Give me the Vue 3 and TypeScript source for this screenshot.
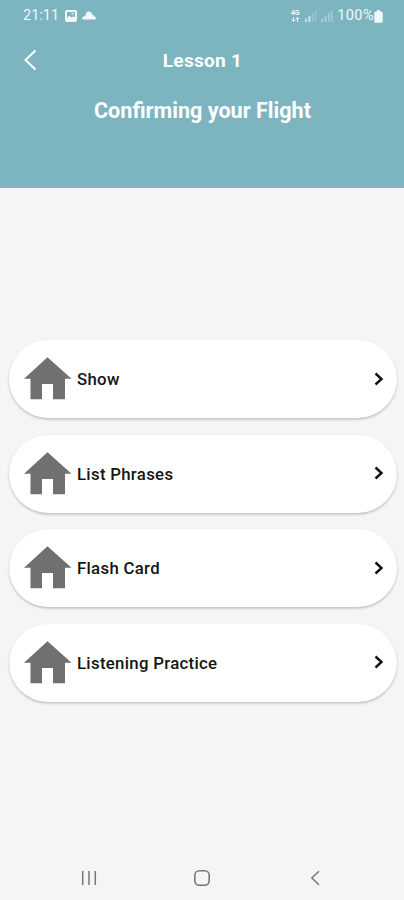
<script setup lang="ts">
interface LessonItem {
  id: string
  title: string
}

const items: LessonItem[] = [
  { id: 'show', title: 'Show' },
  { id: 'phrases', title: 'List Phrases' },
  { id: 'flash', title: 'Flash Card' },
  { id: 'listening', title: 'Listening Practice' },
]
</script>

<template>
  <div class="screen">
    <header class="header">
      <div class="status">
        <span class="time">21:11</span>
        <svg class="photo" width="12" height="12" viewBox="0 0 12 12">
          <rect x="1" y="1" width="10" height="10" rx="1" fill="none" stroke="currentColor" stroke-width="2" />
          <path d="M1.500 10V8L4.500 5.800l2 1.700L9 6.300l1.500 1.500V10z" fill="currentColor" />
          <path d="M6.500 3.800h2.300" stroke="currentColor" stroke-width="1.200" />
        </svg>
        <svg class="cloud" width="14" height="9" viewBox="0 0 14 9">
          <path d="M1.300 8.500C-.2 8.500-.2 6.400 1.200 5.800L3.300 4.800C3.700 2 5 .5 6.800.5s3 1.300 3.700 3.300l2.300 1.700c1.700 1.100 1.300 3-.2 3z" fill="currentColor" />
        </svg>
        <span class="spacer"></span>
        <span class="network">
          <span>4G</span>
          <svg width="9" height="5" viewBox="0 0 9 5">
            <path d="M2.500 0v4.500M.5 2.700l2 1.800 2-1.800M6.500 5V.5M4.800 2.200 6.500.5l1.700 1.700" fill="none" stroke="currentColor" stroke-width="1" />
          </svg>
        </span>
        <svg class="signal" width="12" height="12" viewBox="0 0 12 12" fill="currentColor">
          <path d="M0 12V9.500L2 8v4zM3.300 12V7L5.600 5v7z" />
          <path d="M7 12V3.500L8.800 2v10zM10 12V1.200L11.600 0v12z" opacity=".35" />
        </svg>
        <svg class="signal second" width="12" height="12" viewBox="0 0 12 12" fill="currentColor">
          <path d="M0 12V9.500L2 8v4zM3.300 12V7L5.600 5v7zM7 12V3.500L8.800 2v10zM10 12V1.200L11.600 0v12z" />
        </svg>
        <span class="percent">100%</span>
        <svg class="battery" width="9" height="13" viewBox="0 0 9 13">
          <path d="M3 0h3v1.500h1.200Q8.700 1.500 8.700 3v8.300Q8.700 12.800 7.200 12.800H1.800Q.3 12.800.3 11.300V3Q.3 1.500 1.800 1.500H3z" fill="currentColor" />
        </svg>
      </div>
      <div class="toolbar">
        <svg class="back" width="14" height="22" viewBox="0 0 14 22">
          <path d="M12.500 1.500 2.500 11l10 9.500" fill="none" stroke="currentColor" stroke-width="2" />
        </svg>
        <h1 class="title">Lesson 1</h1>
      </div>
      <h2 class="subtitle">Confirming your Flight</h2>
    </header>

    <main class="list">
      <button v-for="item in items" :key="item.id" class="card" type="button">
        <svg class="house" width="48" height="43" viewBox="0 0 48 43">
          <path d="M23.500.3 0 21.700h6.500v20.500H18V27h11v15.200h12V21.700h6.500z" fill="#707070" />
        </svg>
        <span class="label">{{ item.title }}</span>
        <svg class="chevron" width="10" height="14" viewBox="0 0 10 14">
          <path d="M1.500 1.500 7.500 7l-6 5.500" fill="none" stroke="#111" stroke-width="2.400" />
        </svg>
      </button>
    </main>

    <nav class="nav">
      <svg width="16" height="16" viewBox="0 0 16 16">
        <path d="M1.700 1v14M8 1v14M14.300 1v14" stroke="currentColor" stroke-width="1.500" />
      </svg>
      <svg width="18" height="18" viewBox="0 0 18 18">
        <rect x="1.800" y="1.800" width="14.400" height="14.400" rx="4.500" fill="none" stroke="currentColor" stroke-width="1.600" />
      </svg>
      <svg width="16" height="16" viewBox="0 0 16 16">
        <path d="M12 1.200 4.800 8l7.200 6.800" fill="none" stroke="currentColor" stroke-width="1.500" />
      </svg>
    </nav>
  </div>
</template>

<style>
body {
  margin: 0;
  background: #f5f5f5;
}
</style>

<style scoped>
.screen {
  width: 404px;
  height: 900px;
  display: flex;
  flex-direction: column;
  background: #f5f5f5;
  font-family: Roboto, "Liberation Sans", sans-serif;
  overflow: hidden;
}
.header {
  flex: none;
  box-sizing: border-box;
  height: 188px;
  background: #7cb4bf;
  color: #fff;
}
.status {
  box-sizing: border-box;
  height: 32px;
  padding: 0 21px 0 23px;
  display: flex;
  align-items: center;
  color: #f0f8fa;
}
.time {
  width: 42px;
  font-size: 14.500px;
  line-height: 32px;
}
.cloud {
  margin: 0 0 2px 5px;
}
.spacer {
  flex: 1;
}
.network {
  width: 10px;
  margin-right: 5px;
  display: flex;
  flex-direction: column;
  align-items: center;
  font-size: 7px;
  line-height: 7px;
  font-weight: 700;
}
.signal {
  margin-right: 4px;
  opacity: .65;
}
.second {
  opacity: .35;
}
.percent {
  font-size: 14.500px;
  line-height: 32px;
  letter-spacing: .45px;
}
.toolbar {
  height: 56px;
  padding: 0 23px;
  display: grid;
  grid-template-columns: 14px 1fr 14px;
  align-items: center;
}
.title {
  margin: 2px 0 0;
  padding-left: 1px;
  text-align: center;
  font-size: 19px;
  line-height: 24px;
  font-weight: 700;
  letter-spacing: .3px;
}
.subtitle {
  margin: 9px 0 0;
  padding-left: 1px;
  text-align: center;
  font-size: 21.600px;
  line-height: 28px;
  font-weight: 700;
}
.list {
  flex: 1;
  display: flex;
  flex-direction: column;
  gap: 16.500px;
  padding: 152px 7.500px 0 9px;
}
.card {
  box-sizing: border-box;
  width: 100%;
  height: 78px;
  border: 0;
  border-radius: 39px;
  background: #fff;
  box-shadow: 0 1.500px 2.500px rgba(0, 0, 0, .22);
  display: flex;
  align-items: center;
  padding: 0 13px 1px 15px;
  font-family: inherit;
  text-align: left;
}
.label {
  flex: 1;
  margin: 1px 0 0 5px;
  color: #151515;
  font-size: 16.800px;
  line-height: 24px;
  font-weight: 500;
  letter-spacing: .3px;
}
.nav {
  flex: none;
  height: 44px;
  padding: 0 81px;
  display: flex;
  align-items: center;
  justify-content: space-between;
  color: #777;
}
</style>
